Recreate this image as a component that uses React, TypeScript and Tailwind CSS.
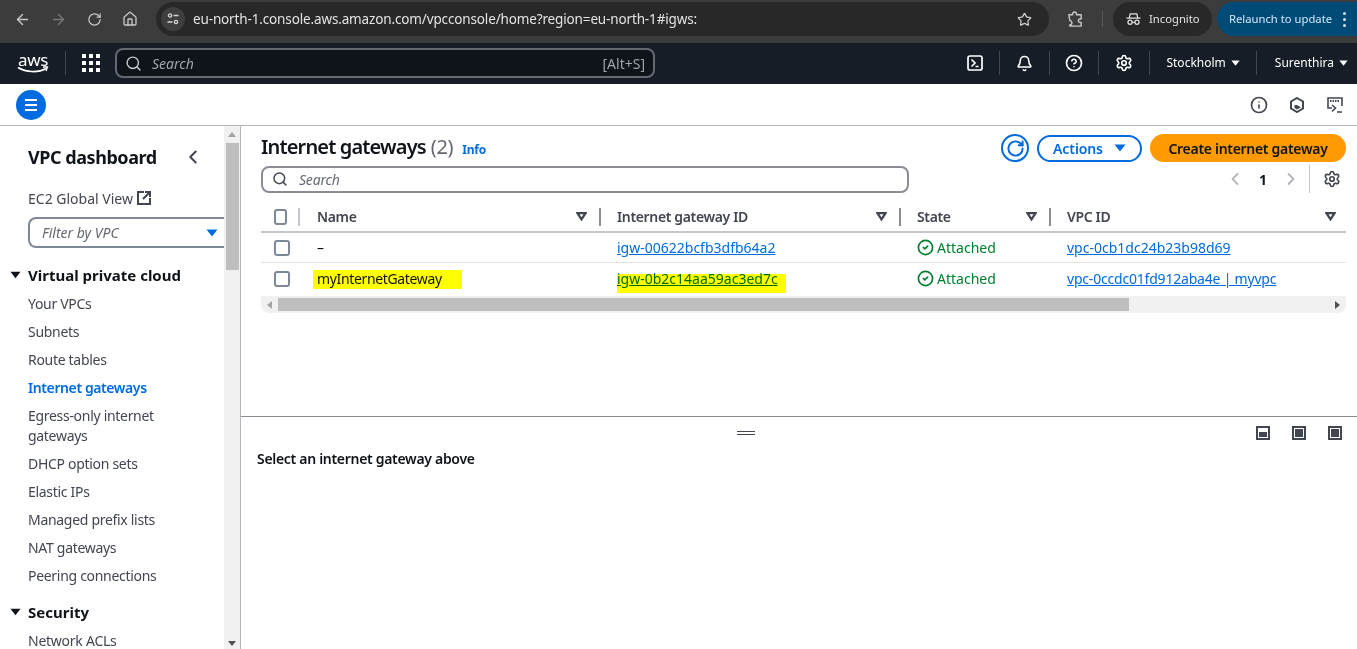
import { ArrowLeft, ArrowRight, RotateCw, House, Star, Bell, CircleHelp, Settings, Search, ChevronLeft, ChevronRight, CircleCheck, Info } from 'lucide-react'

const font = { fontFamily: '"Noto Sans", sans-serif' }

function Caret({ className }: { className: string }) {
  return (
    <svg viewBox="0 0 12 8" className={className} fill="currentColor">
      <path d="M0.5 0.5h11L6 7.5z" />
    </svg>
  )
}

function SortIcon() {
  return (
    <svg viewBox="0 0 12 10" className="w-[11px] h-[9px] shrink-0 text-[#424650]" fill="none" stroke="currentColor" strokeWidth="2.5">
      <path d="M1.5 1.2h9L6 8.2z" />
    </svg>
  )
}

function Checkbox() {
  return <div className="w-4 h-4 rounded-[3px] border-2 border-[#7d8998] bg-white" />
}

function NavDivider() {
  return <div className="w-px h-6 bg-[#414750]" />
}

function BrowserBar() {
  return (
    <div className="h-[43px] bg-[#3c3c3c] flex items-center pb-[5px] text-[#c7c7c7]">
      <div className="w-[156px] flex items-center shrink-0">
        <ArrowLeft size={17} className="ml-[14px]" />
        <ArrowRight size={17} className="ml-[19px] text-[#777]" />
        <RotateCw size={15} className="ml-[20px]" />
        <House size={16} className="ml-[20px] mr-auto" />
      </div>
      <div className="w-[893px] h-[34px] rounded-full bg-[#282828] flex items-center shrink-0">
        <div className="w-[24px] h-[24px] ml-[5px] rounded-full bg-[#3f3f3f] flex items-center justify-center">
          <svg viewBox="0 0 14 14" className="w-[14px] h-[14px]" fill="none" stroke="#d5d5d5" strokeWidth="1.3">
            <circle cx="4" cy="3.5" r="1.6" />
            <path d="M7.5 3.5h5M1.5 10h5" />
            <circle cx="10" cy="10" r="1.6" />
          </svg>
        </div>
        <span className="ml-[8px] text-[13.5px] tracking-[-0.14px] text-[#e3e3e3] whitespace-nowrap">eu-north-1.console.aws.amazon.com/vpcconsole/home?region=eu-north-1#igws:</span>
        <Star size={15} className="ml-auto mr-[17px] text-[#d0d0d0]" />
      </div>
      <svg viewBox="0 0 18 18" className="w-[17px] h-[17px] ml-[18px]" fill="none" stroke="currentColor" strokeWidth="1.5" strokeLinejoin="round">
        <path d="M2 4h4V3a2 2 0 0 1 4 0v1h5v4.5h-1.2a1.8 1.8 0 0 0 0 3.6H15V16H3v-1.2c1.4 0 2.2-1 2.2-2.3S4.2 10 3 10.2z" />
      </svg>
      <div className="w-px h-4 bg-[#5a5a5a] ml-[18px]" />
      <div className="ml-[10px] w-[99px] h-[34px] rounded-full bg-[#282828] flex items-center text-[#e3e3e3]">
        <svg viewBox="0 0 16 14" className="w-[15px] h-[14px] ml-[13px]" fill="none" stroke="currentColor" strokeWidth="1.3">
          <path d="M3.5 5.5l1-4h7l1 4M0.5 6h15" />
          <circle cx="4.3" cy="10.5" r="2.2" />
          <circle cx="11.7" cy="10.5" r="2.2" />
          <path d="M6.5 10.5h3" />
        </svg>
        <span className="ml-[8px] text-[11.25px] whitespace-nowrap">Incognito</span>
      </div>
      <div className="ml-[5px] flex-1 h-[34px] rounded-l-full bg-[#004a77] flex items-center text-[#d3e8fb] min-w-0">
        <span className="ml-[12px] text-[11.25px] whitespace-nowrap">Relaunch to update</span>
        <div className="ml-[11px] flex flex-col gap-[3px]">
          <div className="w-[3px] h-[3px] rounded-full bg-[#d3e8fb]" />
          <div className="w-[3px] h-[3px] rounded-full bg-[#d3e8fb]" />
          <div className="w-[3px] h-[3px] rounded-full bg-[#d3e8fb]" />
        </div>
      </div>
    </div>
  )
}

function AwsNav() {
  return (
    <div className="h-[41px] bg-[#161d26] flex items-center pb-px text-white text-[12px]">
      <div className="w-[66px] shrink-0 flex items-center">
        <div className="ml-[17px] w-[32px] flex flex-col items-center">
          <span className="text-[17px] leading-[13px] tracking-[-0.4px]">aws</span>
          <svg viewBox="0 0 32 7" className="w-[32px] h-[7px]" fill="none">
            <path d="M1 1.5c8 5 20 5.5 28 1" stroke="white" strokeWidth="1.6" />
            <path d="M26 1l4.5 0-1.5 4" stroke="white" strokeWidth="1.3" />
          </svg>
        </div>
        <div className="ml-auto w-px h-6 bg-[#414750]" />
      </div>
      <div className="grid grid-cols-3 gap-[3px] ml-[16px] w-[18px] shrink-0">
        {Array.from({ length: 9 }).map((_, i) => (
          <div key={i} className="w-[4px] h-[4px] bg-white" />
        ))}
      </div>
      <div className="ml-[15px] w-[540px] h-[30px] rounded-lg border-2 border-[#656871] bg-[#0f141a] flex items-center shrink-0">
        <Search size={17} className="ml-[8px] text-[#c6c6cd]" />
        <span className="ml-[10px] text-[14px] italic text-[#a0a4ad]">Search</span>
        <span className="ml-auto mr-[8px] text-[14px] text-[#a0a4ad]">[Alt+S]</span>
      </div>
      <div className="ml-auto flex items-center">
        <svg viewBox="0 0 16 16" className="w-4 h-4" fill="none" stroke="white" strokeWidth="1.7">
          <rect x="1" y="1" width="14" height="14" rx="2" />
          <path d="M4.5 4.5L8 8l-3.5 3.5M8.5 11.5h3" />
        </svg>
        <div className="ml-[16px]"><NavDivider /></div>
        <Bell size={17} strokeWidth={2.2} className="ml-[16px]" />
        <div className="ml-[16px]"><NavDivider /></div>
        <CircleHelp size={18} strokeWidth={2.2} className="ml-[15px]" />
        <div className="ml-[15px]"><NavDivider /></div>
        <Settings size={18} strokeWidth={2.2} className="ml-[16px]" />
        <div className="ml-[16px]"><NavDivider /></div>
        <span className="ml-[16px] whitespace-nowrap">Stockholm</span>
        <Caret className="w-[9px] h-[6px] ml-[5px]" />
        <div className="ml-[16px]"><NavDivider /></div>
        <span className="ml-[18px] whitespace-nowrap">Surenthira</span>
        <Caret className="w-[9px] h-[6px] ml-[5px] mr-[9px]" />
      </div>
    </div>
  )
}

function ToolBar() {
  return (
    <div className="h-[42px] bg-white border-b border-[#b4b4bb] flex items-center text-[#424650]">
      <div className="ml-[16px] w-[30px] h-[30px] rounded-full bg-[#006ce0] flex flex-col items-center justify-center gap-[3px]">
        <div className="w-[12px] h-[2px] bg-white" />
        <div className="w-[12px] h-[2px] bg-white" />
        <div className="w-[12px] h-[2px] bg-white" />
      </div>
      <div className="ml-auto flex items-center mr-[14px]">
        <Info size={18} strokeWidth={2.2} />
        <svg viewBox="0 0 16 16" className="w-4 h-4 ml-[21px]" fill="none" stroke="currentColor" strokeWidth="2">
          <path d="M8 1l6 3.5v7L8 15l-6-3.5v-7z" />
          <path d="M8 8l4 2.2-4 2.3-2.5-1.5V8z" fill="currentColor" stroke="none" />
        </svg>
        <svg viewBox="0 0 16 16" className="w-4 h-4 ml-[22px]" fill="none" stroke="currentColor" strokeWidth="1.6">
          <path d="M5 11H1V1h14v8" />
          <path d="M3 4h10" strokeWidth="2" strokeDasharray="1.5 1" />
          <path d="M5 8l3.5 3L5 14.5M10 15h5" />
        </svg>
      </div>
    </div>
  )
}

const navItems = ['Your VPCs', 'Subnets', 'Route tables', 'Internet gateways', 'Egress-only internet gateways', 'DHCP option sets', 'Elastic IPs', 'Managed prefix lists', 'NAT gateways', 'Peering connections']

function Sidebar() {
  return (
    <div className="w-[241px] shrink-0 flex border-r border-[#b4b4bb] h-full overflow-hidden">
      <div className="w-[224px] shrink-0 overflow-hidden pt-[20px]">
        <div className="flex items-center pl-[28px] h-[22px]">
          <span className="text-[18px] font-bold tracking-[-0.45px] text-[#0f141a] whitespace-nowrap">VPC dashboard</span>
          <ChevronLeft size={22} strokeWidth={2.2} className="ml-auto mr-[20px] text-[#424650]" />
        </div>
        <div className="flex items-center pl-[28px] mt-[20px] h-[20px] text-[14px] text-[#424650]">
          <span>EC2 Global View</span>
          <svg viewBox="0 0 16 16" className="w-[16px] h-[16px] ml-[3px]" fill="none" stroke="currentColor" strokeWidth="2">
            <path d="M8 2H2v12h12V8" />
            <path d="M9 2h5v5M14 2L7 9" />
          </svg>
        </div>
        <div className="ml-[28px] mt-[9px] w-[204px] h-[31px] rounded-l-lg border-2 border-r-0 border-[#7d8998] flex items-center">
          <span className="ml-[12px] text-[14px] italic text-[#656871]">Filter by VPC</span>
          <Caret className="w-[12px] h-[8px] ml-[87px] text-[#006ce0]" />
        </div>
        <div className="flex items-center mt-[17px] h-[20px]">
          <Caret className="w-[11px] h-[8px] ml-[10px] text-[#0f141a]" />
          <span className="ml-[7px] text-[15px] font-bold text-[#0f141a] whitespace-nowrap">Virtual private cloud</span>
        </div>
        <div className="mt-[9px] pl-[28px] pr-[40px] flex flex-col gap-[8px] text-[14px] leading-[20px] tracking-[-0.3px] text-[#424650]">
          {navItems.map((item) => (
            <div key={item} className={item === 'Internet gateways' ? 'font-semibold tracking-[-0.4px] text-[#006ce0]' : ''}>{item}</div>
          ))}
        </div>
        <div className="flex items-center mt-[16px] h-[20px]">
          <Caret className="w-[11px] h-[8px] ml-[10px] text-[#0f141a]" />
          <span className="ml-[7px] text-[15px] font-bold text-[#0f141a]">Security</span>
        </div>
        <div className="mt-[9px] pl-[28px] text-[14px] leading-[20px] tracking-[-0.25px] text-[#424650]">Network ACLs</div>
      </div>
      <div className="w-[16px] bg-[#f1f1f1] flex flex-col items-center">
        <svg viewBox="0 0 8 5" className="w-[8px] h-[5px] mt-[6px] text-[#a3a3a3]" fill="currentColor"><path d="M4 0l4 5H0z" /></svg>
        <div className="w-[13px] h-[127px] bg-[#bebebe] mt-[6px]" />
        <svg viewBox="0 0 8 5" className="w-[8px] h-[5px] mt-auto mb-[3px] text-[#505050]" fill="currentColor"><path d="M0 0h8L4 5z" /></svg>
      </div>
    </div>
  )
}

function HeaderCell({ label, divider = true }: { label: string; divider?: boolean }) {
  return (
    <div className="flex items-center pl-[17px] h-full text-[14px] font-semibold tracking-[-0.35px] text-[#424650]">
      <span className="whitespace-nowrap">{label}</span>
      <div className="ml-auto"><SortIcon /></div>
      {divider ? <div className="w-[2px] h-[18px] bg-[#8c8c94] ml-[12px] -mr-px" /> : <div className="w-[10px]" />}
    </div>
  )
}

// marker strokes over the second row, multiplied like the highlighter in the picture
function Marked({ children, className }: { children: React.ReactNode; className: string }) {
  return (
    <span className="relative inline-block">
      {children}
      <span className={`absolute bg-[#ffff00] mix-blend-multiply ${className}`} />
    </span>
  )
}

function Link({ children }: { children: React.ReactNode }) {
  return <span className="text-[#006ce0] underline whitespace-nowrap">{children}</span>
}

function Attached() {
  return (
    <div className="pl-[17px] flex items-center text-[#00802f]">
      <CircleCheck size={17} strokeWidth={2.4} />
      <span className="ml-[3px]">Attached</span>
    </div>
  )
}

function GatewayTable() {
  const cols = 'grid grid-cols-[39px_300px_300px_150px_296px]'
  return (
    <div className="ml-[20px] mr-[11px] mt-[9px] text-[14px] text-[#0f141a]">
      <div className={`${cols} h-[31px] border-b-2 border-[#c6c6cd] items-center`}>
        <div className="flex items-center h-full pl-[13px]">
          <Checkbox />
          <div className="w-[2px] h-[18px] bg-[#c6c6cd] ml-[11px]" />
        </div>
        <HeaderCell label="Name" />
        <HeaderCell label="Internet gateway ID" />
        <HeaderCell label="State" />
        <HeaderCell label="VPC ID" divider={false} />
      </div>
      <div className={`${cols} h-[30px] border-b border-[#e2e2e6] items-center`}>
        <div className="pl-[13px]"><Checkbox /></div>
        <div className="pl-[17px]">–</div>
        <div className="pl-[17px]"><Link>igw-00622bcfb3dfb64a2</Link></div>
        <Attached />
        <div className="pl-[17px]"><Link>vpc-0cb1dc24b23b98d69</Link></div>
      </div>
      <div className={`${cols} h-[31px] items-center`}>
        <div className="pl-[13px]"><Checkbox /></div>
        <div className="pl-[17px] tracking-[-0.35px]">
          <Marked className="-left-[4px] -right-[20px] top-[2px] bottom-0">myInternetGateway</Marked>
        </div>
        <div className="pl-[17px]">
          <Marked className="left-0 -right-[8px] top-[6px] -bottom-[4px]"><Link>igw-0b2c14aa59ac3ed7c</Link></Marked>
        </div>
        <Attached />
        <div className="pl-[17px] tracking-[-0.2px]"><Link>vpc-0ccdc01fd912aba4e | myvpc</Link></div>
      </div>
      <div className="mt-[2px] h-[17px] bg-[#f1f1f1] rounded-b-lg flex items-center">
        <svg viewBox="0 0 5 8" className="w-[5px] h-[8px] ml-[6px] text-[#a3a3a3]" fill="currentColor"><path d="M5 0v8L0 4z" /></svg>
        <div className="w-[851px] h-[13px] bg-[#bebebe] ml-[6px]" />
        <svg viewBox="0 0 5 8" className="w-[5px] h-[8px] ml-auto mr-[6px] text-[#505050]" fill="currentColor"><path d="M0 0v8l5-4z" /></svg>
      </div>
    </div>
  )
}

function TopPanel() {
  return (
    <div className="h-[291px] border-b border-[#8c8c94] shrink-0">
      <div className="flex items-center mt-[8px] pl-[20px] pr-[11px] h-[28px]">
        <span className="text-[20px] font-semibold tracking-[-0.85px] pb-[2px] text-[#0f141a] whitespace-nowrap">Internet gateways</span>
        <span className="ml-[5px] pb-[2px] text-[20px] tracking-[-0.3px] text-[#656871]">(2)</span>
        <span className="ml-[9px] mt-[3px] text-[12px] font-bold tracking-[-0.2px] text-[#006ce0]">Info</span>
        <div className="ml-auto w-[28px] h-[28px] rounded-full border-2 border-[#006ce0] flex items-center justify-center text-[#006ce0]">
          <RotateCw size={19} strokeWidth={2.5} />
        </div>
        <div className="ml-[8px] w-[105px] h-[27px] rounded-full border-2 border-[#006ce0] flex items-center justify-center text-[14px] font-semibold tracking-[-0.1px] text-[#006ce0]">
          Actions
          <Caret className="w-[12px] h-[8px] ml-[11px]" />
        </div>
        <div className="ml-[8px] w-[196px] h-[28px] rounded-full bg-[#ff9900] flex items-center justify-center text-[14px] font-semibold tracking-[-0.3px] text-[#0f141a] whitespace-nowrap">
          Create internet gateway
        </div>
      </div>
      <div className="flex items-center mt-[3px] pl-[20px] pr-[16px] h-[28px]">
        <div className="w-[648px] h-[27px] rounded-lg border-2 border-[#8c8c94] flex items-center">
          <Search size={16} strokeWidth={2.2} className="ml-[9px] text-[#424650]" />
          <span className="ml-[11px] text-[14px] italic tracking-[-0.2px] text-[#656871]">Search</span>
        </div>
        <ChevronLeft size={20} strokeWidth={2.2} className="ml-auto text-[#b4b4bb]" />
        <span className="ml-[14px] text-[14px] font-bold text-[#0f141a]">1</span>
        <ChevronRight size={20} strokeWidth={2.2} className="ml-[14px] text-[#b4b4bb]" />
        <div className="w-px h-[28px] bg-[#c6c6cd] ml-[8px]" />
        <Settings size={18} strokeWidth={2.2} className="ml-[13px] text-[#424650]" />
      </div>
      <GatewayTable />
    </div>
  )
}

function SplitIcon({ inner }: { inner: string }) {
  return (
    <div className="w-[14px] h-[14px] border-2 border-[#424650] flex items-end">
      <div className={`w-full bg-[#424650] ${inner}`} />
    </div>
  )
}

function BottomPanel() {
  return (
    <div className="flex-1">
      <div className="relative flex items-center h-[32px] pl-[496px]">
        <div className="flex flex-col gap-[2px]">
          <div className="w-[18px] h-px bg-[#424650]" />
          <div className="w-[18px] h-px bg-[#424650]" />
        </div>
        <div className="absolute right-[15px] top-[9px] flex gap-[22px]">
          <SplitIcon inner="h-[5px] mx-px mb-px" />
          <SplitIcon inner="h-[8px] mx-px mb-px" />
          <SplitIcon inner="h-[8px] m-px" />
        </div>
      </div>
      <div className="pl-[16px] -mt-px text-[14px] font-semibold tracking-[-0.3px] text-[#0f141a]">Select an internet gateway above</div>
    </div>
  )
}

export default function App() {
  return (
    <div className="h-[649px] w-[1357px] overflow-hidden bg-white flex flex-col" style={font}>
      <BrowserBar />
      <AwsNav />
      <ToolBar />
      <div className="flex flex-1 min-h-0">
        <Sidebar />
        <div className="flex-1 flex flex-col min-w-0">
          <TopPanel />
          <BottomPanel />
        </div>
      </div>
    </div>
  )
}
